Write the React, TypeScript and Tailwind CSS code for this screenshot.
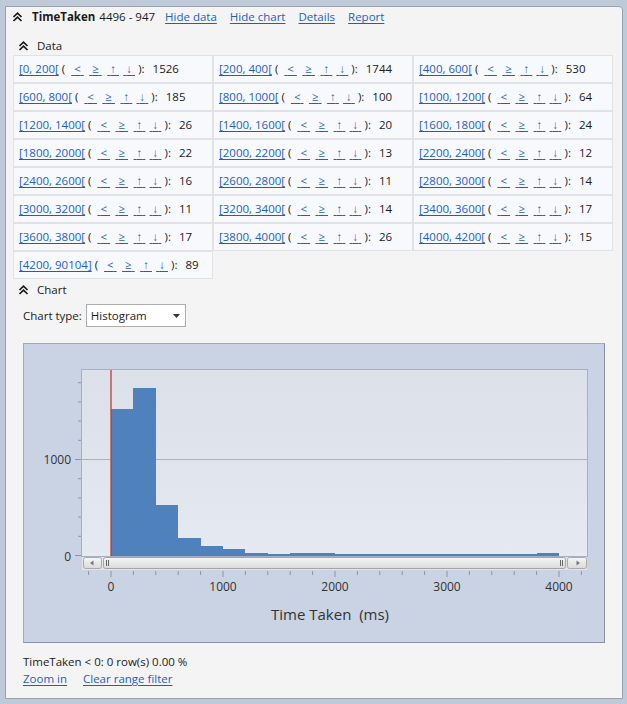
import React from 'react';

const cells: [string, number][] = [
  ['[0, 200[', 1526], ['[200, 400[', 1744], ['[400, 600[', 530],
  ['[600, 800[', 185], ['[800, 1000[', 100], ['[1000, 1200[', 64],
  ['[1200, 1400[', 26], ['[1400, 1600[', 20], ['[1600, 1800[', 24],
  ['[1800, 2000[', 22], ['[2000, 2200[', 13], ['[2200, 2400[', 12],
  ['[2400, 2600[', 16], ['[2600, 2800[', 11], ['[2800, 3000[', 14],
  ['[3000, 3200[', 11], ['[3200, 3400[', 14], ['[3400, 3600[', 17],
  ['[3600, 3800[', 17], ['[3800, 4000[', 26], ['[4000, 4200[', 15],
  ['[4200, 90104]', 89],
];

// bars shown in the chart: 0..4000 by 200
const bars = cells.slice(0, 20).map((c) => c[1]);

const Chevrons = () => (
  <svg width="11" height="10" viewBox="0 0 11 10" className="shrink-0">
    <path d="M1.5 5 L5.5 1.2 L9.5 5 M1.5 9 L5.5 5.2 L9.5 9" fill="none" stroke="#1a1a1a" strokeWidth="1.7" />
  </svg>
);

const Link = ({ children, className = '' }: { children: React.ReactNode; className?: string }) => (
  <a href="#" className={`text-[#1c5fc4] underline underline-offset-[2px] decoration-[#1c5fc4] whitespace-pre ${className}`}>
    {children}
  </a>
);

const Arrow = ({ children, className = '' }: { children: React.ReactNode; className?: string }) => (
  <a href="#" className={`inline-block w-[12px] text-center text-[#1c5fc4] underline underline-offset-[2px] whitespace-pre ${className}`}>
    {'\u00a0'}{children}{'\u00a0'}
  </a>
);

const Cell = ({ label, count }: { label: string; count: number }) => (
  <div className="h-[28px] border border-[#e1e2e6] bg-[#f8f9fd] flex items-center pl-[5px] whitespace-pre">
    <Link>{label}</Link>
    <span> (</span>
    <Arrow className="ml-[6px]">&lt;</Arrow>
    <Arrow className="ml-[6px]">≥</Arrow>
    <Arrow className="ml-[6px]">↑</Arrow>
    <Arrow className="ml-[4px]">↓</Arrow>
    <span className="ml-[3px]">):</span>
    <span className="ml-[8px]">{count}</span>
  </div>
);

const Chart = () => {
  const x0 = 87;
  const sx = 0.112;
  const y0 = 211.5;
  const sy = 0.096;
  const yTicks = [0, 200, 400, 600, 800, 1000, 1200, 1400, 1600, 1800];
  const xTicks: number[] = [];
  for (let v = -200; v <= 4200; v += 200) xTicks.push(v);
  return (
    <svg width="580" height="298" viewBox="0 0 580 298" className="block" fontFamily="'Open Sans', sans-serif">
      <defs>
        <linearGradient id="plot" x1="0" y1="0" x2="0" y2="1">
          <stop offset="0" stopColor="#dbe0e9" />
          <stop offset="1" stopColor="#e5e9f1" />
        </linearGradient>
        <linearGradient id="btn" x1="0" y1="0" x2="0" y2="1">
          <stop offset="0" stopColor="#f6f6f6" />
          <stop offset="1" stopColor="#d9d9d9" />
        </linearGradient>
      </defs>
      {/* plot area */}
      <rect x="57.5" y="25.5" width="506" height="187" fill="url(#plot)" stroke="#a6b0c1" />
      <line x1="58" y1={y0 - 1000 * sy} x2="563" y2={y0 - 1000 * sy} stroke="#aab1bd" strokeWidth="1" />
      <g shapeRendering="crispEdges">
        {bars.map((v, i) => (
          <rect
            key={i}
            x={Math.round(x0 + i * 200 * sx)}
            y={y0 - v * sy}
            width={Math.round(x0 + (i + 1) * 200 * sx) - Math.round(x0 + i * 200 * sx)}
            height={v * sy}
            fill="#4f81bd"
          />
        ))}
      </g>
      <line x1={x0} y1="26" x2={x0} y2="212" stroke="#c0393b" strokeWidth="1.3" />
      {/* y axis ticks */}
      {yTicks.map((v) => (
        <line key={v} x1={v % 1000 === 0 ? 51 : 54} y1={y0 - v * sy} x2="57" y2={y0 - v * sy} stroke="#8c95a5" />
      ))}
      <text x="47" y={y0 - 1000 * sy + 4.5} textAnchor="end" fontSize="12" fill="#333">1000</text>
      <text x="47" y={y0 + 5.5} textAnchor="end" fontSize="12" fill="#333">0</text>
      {/* scrollbar */}
      <rect x="58" y="213" width="505" height="13" fill="#e4e4e4" />
      <rect x="59.5" y="213.5" width="18" height="11" rx="2" fill="url(#btn)" stroke="#aaaaaa" />
      <path d="M66 219 L69.5 216.5 L69.5 221.5 Z" fill="#777" />
      <rect x="79.5" y="213.5" width="462" height="11" rx="2" fill="url(#btn)" stroke="#a4a4a4" />
      <line x1="82.5" y1="216" x2="82.5" y2="222" stroke="#666" />
      <line x1="84.5" y1="216" x2="84.5" y2="222" stroke="#666" />
      <line x1="536.5" y1="216" x2="536.5" y2="222" stroke="#666" />
      <line x1="538.5" y1="216" x2="538.5" y2="222" stroke="#666" />
      <rect x="543.5" y="213.5" width="19" height="11" rx="2" fill="url(#btn)" stroke="#aaaaaa" />
      <path d="M556 219 L552.5 216.5 L552.5 221.5 Z" fill="#777" />
      {/* x axis ticks */}
      {xTicks.map((v) => (
        <line key={v} x1={x0 + v * sx} y1="227" x2={x0 + v * sx} y2={v % 1000 === 0 ? 233 : 231} stroke="#8c95a5" />
      ))}
      {[0, 1000, 2000, 3000, 4000].map((v) => (
        <text key={v} x={x0 + v * sx} y="247" textAnchor="middle" fontSize="12" fill="#333">{v}</text>
      ))}
      <text x="306" y="276" textAnchor="middle" fontSize="15" fill="#333" xmlSpace="preserve">Time Taken  (ms)</text>
    </svg>
  );
};

export default function App() {
  return (
    <div
      className="w-[627px] h-[704px] bg-[#bfcad9] pt-[6px] pl-[5px] text-[11.5px] text-[#1b1b1b] overflow-hidden"
      style={{ fontFamily: "'Open Sans', sans-serif" }}
    >
      <div className="w-[618px] h-[693px] bg-[#f4f4f4] border border-[#9aa1aa] rounded-tr-[4px]">
        {/* Header */}
        <div className="h-[20px] flex items-center pl-[6px]">
          <Chevrons />
          <span className="ml-[9px] font-bold">TimeTaken</span>
          <span className="ml-[4px]">4496 - 947</span>
          <Link className="ml-[10px]">Hide data</Link>
          <Link className="ml-[13px]">Hide chart</Link>
          <Link className="ml-[13px]">Details</Link>
          <Link className="ml-[13px]">Report</Link>
        </div>

        {/* Data */}
        <div className="h-[19px] mt-[9px] flex items-center pl-[12px]">
          <Chevrons />
          <span className="ml-[8px]">Data</span>
        </div>
        <div className="ml-[7px] w-[600px] grid grid-cols-3">
          {cells.map(([label, count]) => (
            <Cell key={label} label={label} count={count} />
          ))}
        </div>

        {/* Chart */}
        <div className="h-[19px] mt-[1px] flex items-center pl-[12px]">
          <Chevrons />
          <span className="ml-[8px]">Chart</span>
        </div>
        <div className="mt-[5px] ml-[17px] flex items-center">
          <span>Chart type:</span>
          <div className="ml-[4px] w-[100px] h-[23px] bg-white border border-[#adadad] flex items-center justify-between pl-[4px] pr-[5px]">
            <span>Histogram</span>
            <svg width="7" height="4" viewBox="0 0 7 4">
              <path d="M0 0 L7 0 L3.5 4 Z" fill="#333" />
            </svg>
          </div>
        </div>
        <div className="mt-[16px] ml-[17px] w-[582px] h-[300px] bg-[#c9d3e3] border border-[#a3abb8] border-r-[#8792a5] border-b-[#8792a5]">
          <Chart />
        </div>

        {/* Footer */}
        <div className="mt-[10px] ml-[17px] leading-[17px]">
          <div>TimeTaken &lt; 0: 0 row(s) 0.00 %</div>
          <div className="flex">
            <Link>Zoom in</Link>
            <Link className="ml-[16px]">Clear range filter</Link>
          </div>
        </div>
      </div>
    </div>
  );
}
